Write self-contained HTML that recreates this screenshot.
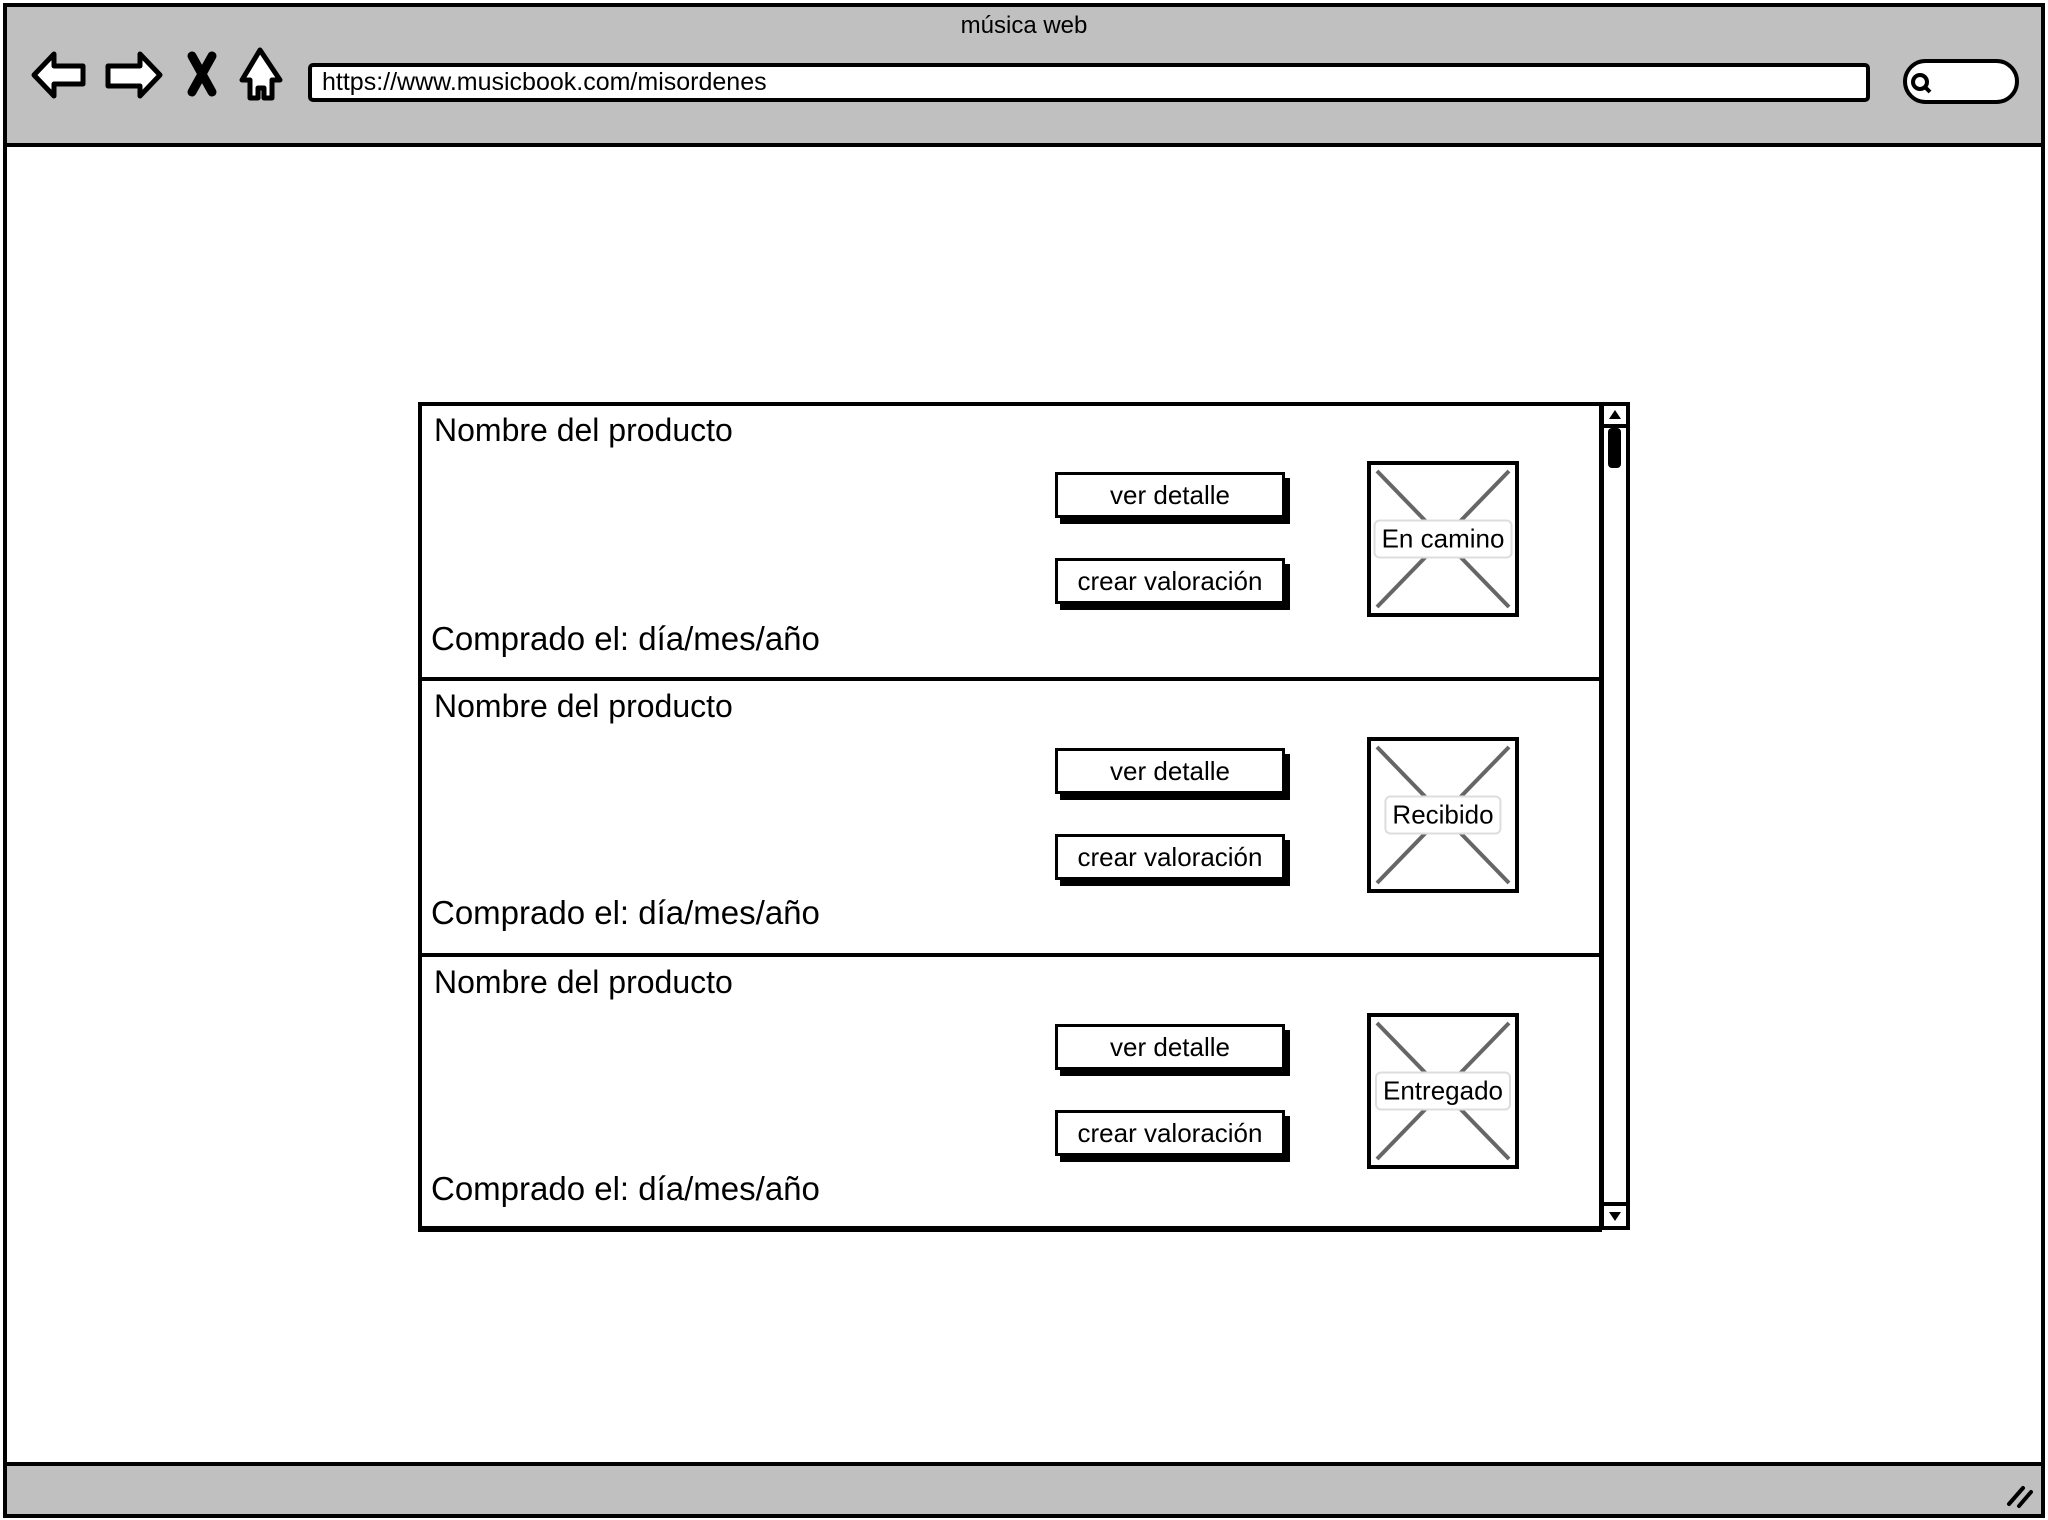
<!DOCTYPE html>
<html><head><meta charset="utf-8"><style>
*{margin:0;padding:0;box-sizing:border-box}
body{width:2048px;height:1520px;background:#fff;position:relative;overflow:hidden;font-family:"Liberation Sans",sans-serif;color:#000}
.a{position:absolute}
.frame{left:3px;top:3px;width:2042px;height:1515px;border:4px solid #000;background:#fff}
.top{left:3px;top:3px;width:2042px;height:144px;background:#c0c0c0;border:4px solid #000}
.bot{left:3px;top:1462px;width:2042px;height:56px;background:#c0c0c0;border:4px solid #000}
.url{left:308px;top:63px;width:1562px;height:39px;background:#fff;border:4px solid #000;border-radius:5px;font-size:25px;line-height:31px;padding-left:10px}
.title{left:0;width:2048px;top:12px;text-align:center;font-size:24px}
.search{left:1903px;top:59px;width:116px;height:45px;background:#fff;border:4px solid #000;border-radius:24px}
.list{left:418px;top:402px;width:1212px;height:828px;border:4px solid #000;background:#fff}
.row{left:418px;width:1184px;height:278px;border:3px solid #000}
.sb{left:1600px;top:402px;width:30px;height:828px;border:4px solid #000;background:#fff}
.t1{font-size:32px;left:434px}
.t2{font-size:33px;left:431px}
.btn{left:1055px;width:230px;height:46px;border:3px solid #000;background:#fff;box-shadow:5px 6px 0 #000;font-size:26px;text-align:center;line-height:40px}
.img{left:1367px;width:152px;height:156px;border:4px solid #000;background:#fff}
.lab{position:absolute;left:50%;top:50%;transform:translate(-50%,-50%);background:#fff;border:2px solid #ddd;border-radius:6px;font-size:26px;padding:2px 6px;white-space:nowrap}
</style></head><body>
<div class="a frame"></div>
<div class="a top"></div>
<div class="a title">música web</div>
<svg class="a" style="left:28px;top:46px" width="270" height="60" viewBox="0 0 270 60">
<path d="M6 29 L26 8 L26 20 L55 20 L55 38 L26 38 L26 50 Z" fill="#fff" stroke="#000" stroke-width="5" stroke-linejoin="round"/>
<path d="M132 29 L112 8 L112 20 L80 20 L80 40 L112 40 L112 50 Z" fill="#fff" stroke="#000" stroke-width="5" stroke-linejoin="round"/>
<path d="M164 10 L184 46 M184 10 L164 46" stroke="#000" stroke-width="9" stroke-linecap="round"/>
<path d="M232 4 L214 34 L222 34 L222 52 L230 52 L230 42 L236 42 L236 52 L244 52 L244 34 L252 34 Z" fill="#fff" stroke="#000" stroke-width="5" stroke-linejoin="round"/>
</svg>
<div class="a url">https://www.musicbook.com/misordenes</div>
<div class="a search"></div>
<svg class="a" style="left:1908px;top:70px" width="30" height="30"><circle cx="12" cy="12" r="7" fill="none" stroke="#000" stroke-width="4"/><path d="M16 16 L22 22" stroke="#000" stroke-width="4"/></svg>
<div class="a bot"></div>
<svg class="a" style="left:2005px;top:1480px" width="30" height="30"><path d="M4 24 L18 8 M14 26 L26 12" stroke="#000" stroke-width="4" stroke-linecap="round"/></svg>

<div class="a list"></div>
<div class="a sb"></div>
<div class="a" style="left:1600px;top:424px;width:30px;height:4px;background:#000"></div>
<div class="a" style="left:1600px;top:1202px;width:30px;height:4px;background:#000"></div>
<svg class="a" style="left:1604px;top:406px" width="22" height="820"><path d="M5 13 L11 4 L17 13 Z" fill="#000"/><rect x="4" y="22" width="13" height="40" rx="4" fill="#000"/><path d="M5 806 L11 815 L17 806 Z" fill="#000"/></svg>

<div class="a row" style="top:402px"></div>
<div class="a row" style="top:678px"></div>
<div class="a row" style="top:954px"></div>

<div class="a t1" style="top:412px">Nombre del producto</div>
<div class="a t2" style="top:620px">Comprado el: día/mes/año</div>
<div class="a btn" style="top:472px">ver detalle</div>
<div class="a btn" style="top:558px">crear valoración</div>
<div class="a img" style="top:461px"><svg width="144" height="148" style="position:absolute;left:0;top:0"><path d="M6 6 L138 142 M138 6 L6 142" stroke="#666" stroke-width="4"/></svg><div class="lab">En camino</div></div>

<div class="a t1" style="top:688px">Nombre del producto</div>
<div class="a t2" style="top:894px">Comprado el: día/mes/año</div>
<div class="a btn" style="top:748px">ver detalle</div>
<div class="a btn" style="top:834px">crear valoración</div>
<div class="a img" style="top:737px"><svg width="144" height="148" style="position:absolute;left:0;top:0"><path d="M6 6 L138 142 M138 6 L6 142" stroke="#666" stroke-width="4"/></svg><div class="lab">Recibido</div></div>

<div class="a t1" style="top:964px">Nombre del producto</div>
<div class="a t2" style="top:1170px">Comprado el: día/mes/año</div>
<div class="a btn" style="top:1024px">ver detalle</div>
<div class="a btn" style="top:1110px">crear valoración</div>
<div class="a img" style="top:1013px"><svg width="144" height="148" style="position:absolute;left:0;top:0"><path d="M6 6 L138 142 M138 6 L6 142" stroke="#666" stroke-width="4"/></svg><div class="lab">Entregado</div></div>
</body></html>
